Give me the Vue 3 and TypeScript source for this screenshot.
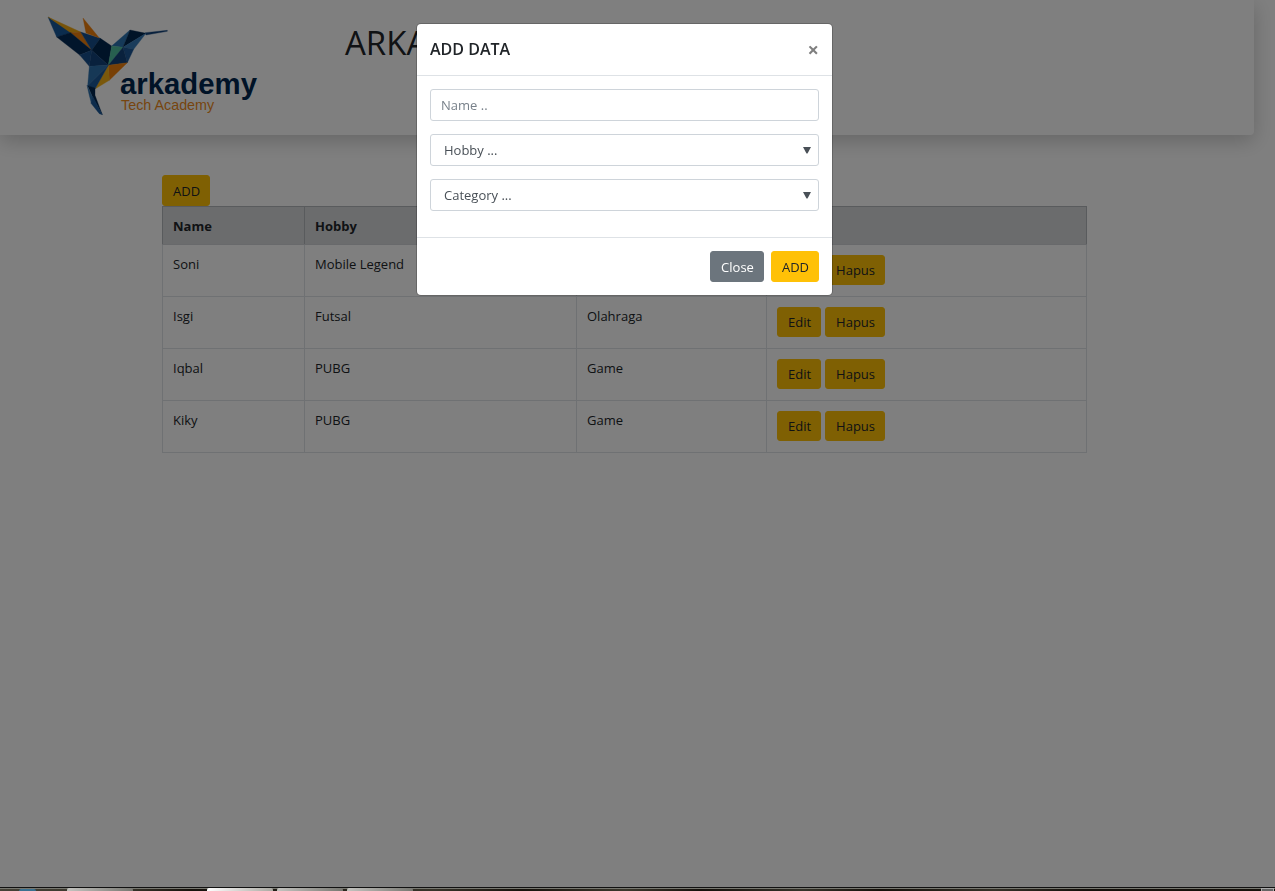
<script setup lang="ts">
import { ref } from 'vue'

interface Person {
  name: string
  hobby: string
  category: string
}

const people = ref<Person[]>([
  { name: 'Soni', hobby: 'Mobile Legend', category: 'Game' },
  { name: 'Isgi', hobby: 'Futsal', category: 'Olahraga' },
  { name: 'Iqbal', hobby: 'PUBG', category: 'Game' },
  { name: 'Kiky', hobby: 'PUBG', category: 'Game' },
])

const open = ref(true)
const name = ref('')
const hobby = ref('')
const category = ref('')

function add(): void {
  if (name.value && hobby.value && category.value) {
    people.value.push({ name: name.value, hobby: hobby.value, category: category.value })
    open.value = false
  }
}

function remove(index: number): void {
  people.value.splice(index, 1)
}
</script>

<template>
  <div class="page">
    <header class="banner">
      <svg class="logo" viewBox="0 0 675 345" role="img" aria-label="arkademy Tech Academy">
        <g stroke-width="1" stroke-linejoin="round">
          <polygon points="24,27 97,74 50,87" fill="#17599a" stroke="#17599a" />
          <polygon points="24,27 122,72 92,74" fill="#f0a812" stroke="#f0a812" />
          <polygon points="92,74 122,72 155,127" fill="#f0800c" stroke="#f0800c" />
          <polygon points="122,72 181,91 155,127" fill="#174f8c" stroke="#174f8c" />
          <polygon points="181,91 215,114 205,172 155,127" fill="#00264f" stroke="#00264f" />
          <polygon points="50,87 92,74 155,127 119,141" fill="#032a57" stroke="#032a57" />
          <polygon points="119,141 155,127 148,175" fill="#174f8c" stroke="#174f8c" />
          <polygon points="155,127 205,172 148,175" fill="#12437b" stroke="#12437b" />
          <polygon points="129,30 178,90 138,75" fill="#f0800c" stroke="#f0800c" />
          <polygon points="215,114 270,66 249,118" fill="#2a73b0" stroke="#2a73b0" />
          <polygon points="270,66 318,76 249,118" fill="#00264f" stroke="#00264f" />
          <polygon points="316,74 382,67 382,70 318,81" fill="#12437b" stroke="#12437b" />
          <polygon points="318,76 281,124 249,118" fill="#3479b6" stroke="#3479b6" />
          <polygon points="249,118 281,124 262,164" fill="#1c5796" stroke="#1c5796" />
          <polygon points="215,114 249,118 205,172" fill="#4fbf9f" stroke="#4fbf9f" />
          <polygon points="249,118 262,164 205,172" fill="#12437b" stroke="#12437b" />
          <polygon points="205,172 262,164 208,217" fill="#f0800c" stroke="#f0800c" />
          <polygon points="205,172 208,217 165,243" fill="#f4b016" stroke="#f4b016" />
          <polygon points="148,175 205,172 143,233" fill="#2c70ac" stroke="#2c70ac" />
          <polygon points="205,172 165,243 143,233" fill="#1b5898" stroke="#1b5898" />
          <polygon points="143,233 165,240 165,262 187,320 158,268" fill="#00264f" stroke="#00264f" />
          <polygon points="141,232 158,268 154,286 148,263" fill="#2c70ac" stroke="#2c70ac" />
          <polygon points="158,265 187,320 178,317 153,286" fill="#1b5898" stroke="#1b5898" />
        </g>
        <text class="brand" x="240" y="257">arkademy</text>
        <text class="tagline" x="243" y="306">Tech Academy</text>
      </svg>
      <h1>ARKADEMY BOOTCAMP</h1>
    </header>

    <main class="content">
      <button type="button" class="btn warning" @click="open = true">ADD</button>
      <table>
        <colgroup>
          <col class="col-name" />
          <col class="col-hobby" />
          <col class="col-category" />
          <col />
        </colgroup>
        <thead>
          <tr>
            <th scope="col">Name</th>
            <th scope="col">Hobby</th>
            <th scope="col">Category</th>
            <th scope="col" aria-label="Action"></th>
          </tr>
        </thead>
        <tbody>
          <tr v-for="(person, index) in people" :key="index">
            <td>{{ person.name }}</td>
            <td>{{ person.hobby }}</td>
            <td>{{ person.category }}</td>
            <td>
              <div class="actions">
                <button type="button" class="btn warning">Edit</button>
                <button type="button" class="btn warning" @click="remove(index)">Hapus</button>
              </div>
            </td>
          </tr>
        </tbody>
      </table>
    </main>
  </div>

  <div v-if="open" class="backdrop">
    <form class="modal" role="dialog" aria-labelledby="modal-title" @submit.prevent="add">
      <div class="modal-header">
        <h2 id="modal-title">ADD DATA</h2>
        <button type="button" class="dismiss" aria-label="Close dialog" @click="open = false">×</button>
      </div>
      <div class="modal-body">
        <input v-model="name" class="control" type="text" placeholder="Name .." aria-label="Name" />
        <div class="picker">
          <select v-model="hobby" class="control" aria-label="Hobby">
            <option value="">Hobby ...</option>
            <option>Mobile Legend</option>
            <option>Futsal</option>
            <option>PUBG</option>
          </select>
          <svg class="arrow" viewBox="0 0 8 8" aria-hidden="true"><path d="M0 1H8L4.5 7.5H3.5Z" /></svg>
        </div>
        <div class="picker">
          <select v-model="category" class="control" aria-label="Category">
            <option value="">Category ...</option>
            <option>Game</option>
            <option>Olahraga</option>
          </select>
          <svg class="arrow" viewBox="0 0 8 8" aria-hidden="true"><path d="M0 1H8L4.5 7.5H3.5Z" /></svg>
        </div>
      </div>
      <div class="modal-footer">
        <button type="button" class="btn secondary" @click="open = false">Close</button>
        <button type="submit" class="btn warning">ADD</button>
      </div>
    </form>
  </div>

  <div class="taskbar" aria-hidden="true">
    <span class="orb"></span>
    <span class="task first"></span>
    <span class="task active"></span>
    <span class="task"></span>
    <span class="task"></span>
    <span class="desktop"></span>
  </div>
</template>

<style>
body {
  margin: 0;
  background: #fff;
}
</style>

<style scoped>
* {
  box-sizing: border-box;
}

.page,
.backdrop {
  font-family: 'Open Sans', 'Noto Sans', sans-serif;
  font-size: 13px;
  line-height: 20px;
  color: #212529;
}

.page {
  min-height: 100vh;
  overflow: hidden;
}

.banner {
  display: flex;
  align-items: flex-start;
  gap: 80px;
  height: 135px;
  margin-right: 21px;
  padding: 8px 0 0 40px;
  border-radius: 0 0 4px 0;
  background: #fff;
  box-shadow: 0 6px 20px rgba(0, 0, 0, 0.2);
}

.logo {
  flex: none;
  width: 225px;
  height: 115px;
}

.brand {
  font: bold 88px 'Liberation Sans', Arial, sans-serif;
  fill: #00264f;
}

.tagline {
  font: 43px 'Liberation Sans', Arial, sans-serif;
  fill: #ee8a1c;
}

h1 {
  margin: 15px 0 0;
  font-size: 33px;
  font-weight: 400;
  line-height: 40px;
}

.content {
  display: flex;
  flex-direction: column;
  align-items: flex-start;
  width: calc(100% - 26px);
  max-width: 925px;
  margin-top: 40px;
  margin-left: max(0px, calc((100% - 951px) / 2));
}

.btn {
  height: 31px;
  padding: 0 9px 0 10px;
  border: 1px solid transparent;
  border-radius: 3px;
  font: inherit;
  cursor: pointer;
}

.warning {
  background: #ffc107;
  border-color: #ffc107;
  color: #212529;
}

.secondary {
  background: #6c757d;
  border-color: #6c757d;
  color: #fff;
}

table {
  width: 100%;
  table-layout: fixed;
  border-collapse: collapse;
}

.col-name {
  width: 142px;
}

.col-hobby {
  width: 272px;
}

.col-category {
  width: 190px;
}

th,
td {
  padding: 9px 10px 0;
  border: 1px solid #dee2e6;
  text-align: left;
  vertical-align: top;
}

th {
  height: 38px;
  background: #d6d8db;
  border-color: #b3b7bb;
  border-bottom-color: #d0d3d6;
  font-weight: 700;
}

td {
  height: 52px;
}

.actions {
  display: flex;
  gap: 4px;
  padding-top: 1px;
}

.actions .btn {
  height: 30px;
}

.backdrop {
  position: fixed;
  inset: 0;
  padding: 24px 26px 0 0;
  background: rgba(0, 0, 0, 0.5);
}

.modal {
  width: 415px;
  margin: 0 auto;
  border-radius: 4px;
  background: #fff;
  box-shadow: 0 0 0 1px rgba(0, 0, 0, 0.2);
}

.modal-header {
  display: flex;
  align-items: flex-start;
  justify-content: space-between;
  height: 52px;
  padding: 13px;
  border-bottom: 1px solid #dee2e6;
}

h2 {
  margin: 0;
  font-size: 16px;
  font-weight: 600;
  line-height: 24px;
}

.dismiss {
  padding: 0;
  border: 0;
  background: none;
  color: #7f7f7f;
  font: 700 20px/26px 'Open Sans', sans-serif;
  cursor: pointer;
}

.modal-body {
  display: flex;
  flex-direction: column;
  gap: 13px;
  padding: 13px 13px 26px;
}

.control {
  display: block;
  width: 100%;
  height: 32px;
  padding: 0 10px;
  border: 1px solid #ced4da;
  border-radius: 3px;
  background: #fff;
  color: #495057;
  font: inherit;
  appearance: none;
}

.control::placeholder {
  color: #78818a;
  opacity: 1;
}

.picker {
  position: relative;
}

select.control {
  padding: 0 24px 0 13px;
}

.arrow {
  position: absolute;
  top: 12px;
  right: 8px;
  width: 8px;
  height: 8px;
  fill: #495057;
  pointer-events: none;
}

.modal-footer {
  display: flex;
  justify-content: flex-end;
  gap: 7px;
  padding: 13px;
  border-top: 1px solid #dee2e6;
}

.taskbar {
  position: fixed;
  right: 0;
  bottom: 0;
  left: 0;
  display: flex;
  gap: 4px;
  height: 4px;
  padding: 1px 1px 0 19px;
  border-top: 1px solid #111;
  background: linear-gradient(#77776f 0 1px, transparent 1px), linear-gradient(90deg, #454237, #38352b 10%, #17130d 15%, #37342a 34%, #17130d 41%, #3b382d 49%, #15110c 55%, #35332a 63%, #15110b 69%, #343128 78%, #15110c 85%, #17130d);
}

.orb {
  width: 17px;
  height: 2px;
  border-radius: 8px 8px 0 0;
  background: #3b7190;
}

.task {
  width: 66px;
  height: 4px;
  margin-top: -1px;
  border-radius: 2px 2px 0 0;
  background: linear-gradient(100deg, #c4c4c0, #777771);
}

.first {
  margin-left: 27px;
}

.active {
  margin-left: 70px;
  background: linear-gradient(100deg, #fff, #aaa9a2);
}

.desktop {
  width: 13px;
  height: 4px;
  margin-top: -1px;
  margin-left: auto;
  border: 1px solid #aaa;
  background: #666;
}
</style>
